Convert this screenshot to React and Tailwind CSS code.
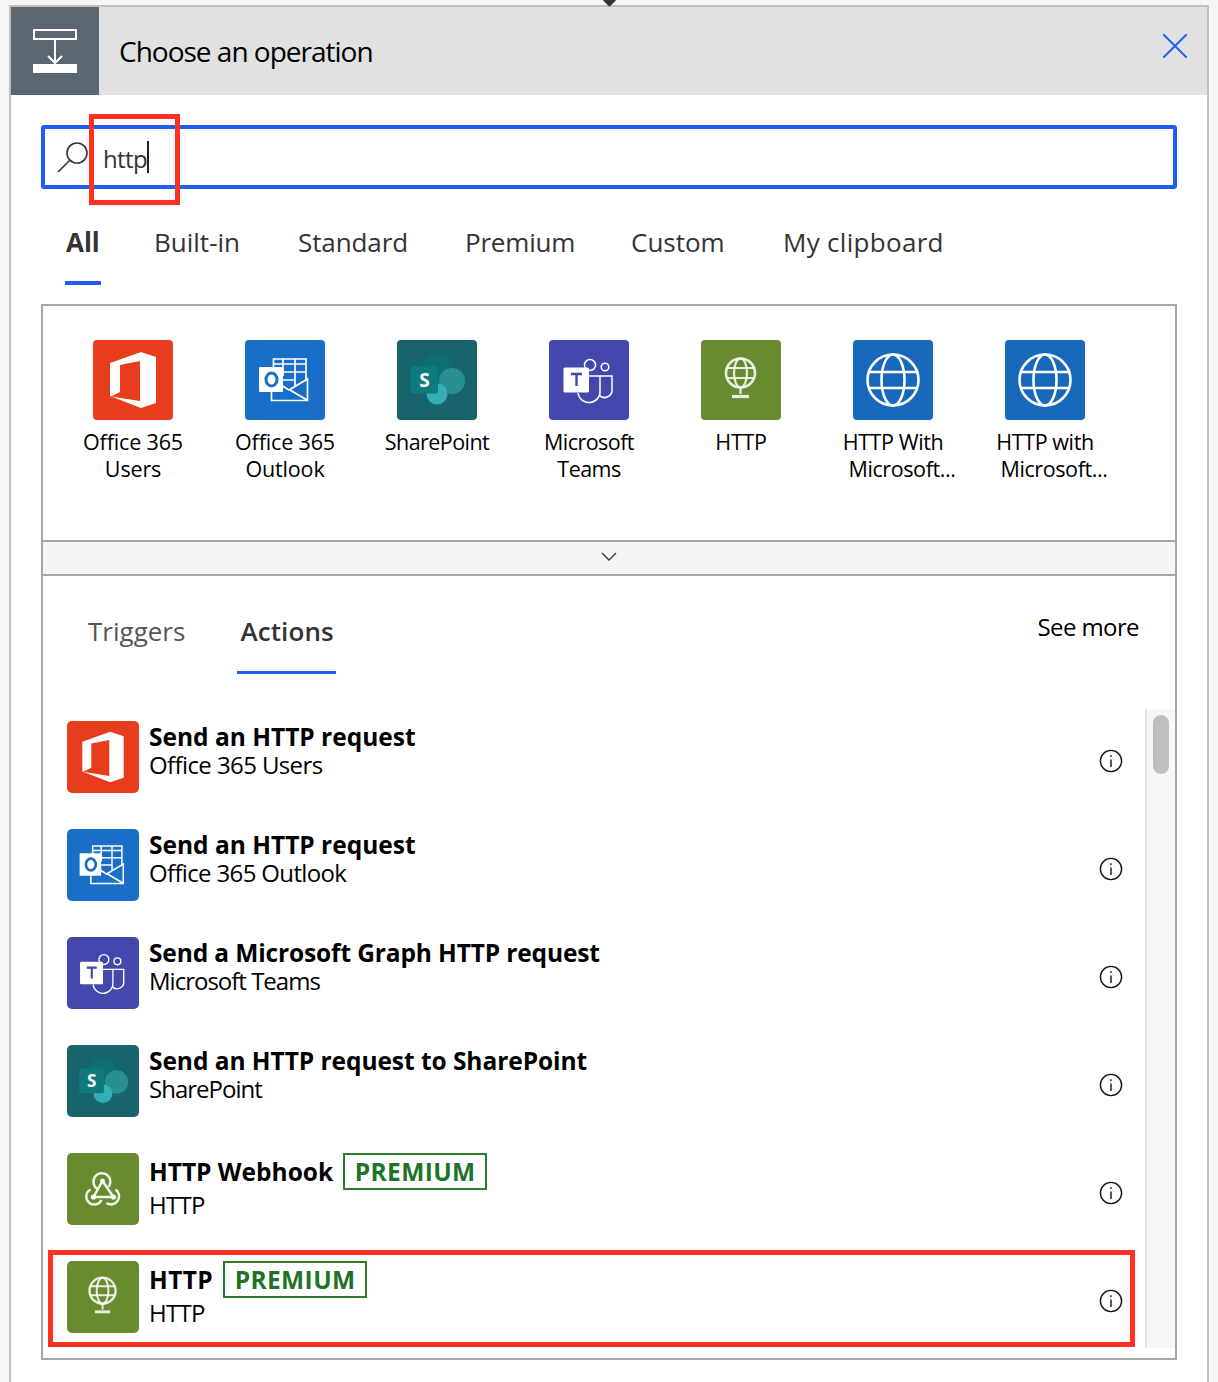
import React from 'react';

function Office() {
  return <svg viewBox="0 0 80 80" className="w-full h-full"><path fillRule="evenodd" fill="#fff" d="M17 23 48 12 63 17V63L48 68 17 56ZM27 25V52L18 56.5 47 61V21Z" /></svg>;
}
function Outlook() {
  return <svg viewBox="0 0 80 80" className="w-full h-full" fill="none" stroke="#fff" strokeWidth="1.7">
    <path d="M28.5 28V19H61V40M38 19V36M50 19V46M28 24H61M38 32H61M38 40H50" />
    <path d="M26.5 47V60.5H62.5V39L44 50 36 45" /><path d="M45 50 62 60" />
    <rect x="14" y="27" width="24" height="25" rx="1" fill="#fff" stroke="none" />
    <ellipse cx="26.5" cy="39.5" rx="5.5" ry="6.5" stroke="#196ec8" strokeWidth="3" />
  </svg>;
}
function SharePoint() {
  return <svg viewBox="0 0 80 80" className="w-full h-full">
    <circle cx="40" cy="28" r="15" fill="#0f6e70" />
    <circle cx="55" cy="41" r="13" fill="#2a8f90" />
    <circle cx="40" cy="54" r="10.5" fill="#36aeb8" />
    <rect x="13.5" y="26" width="27.5" height="27.5" rx="2" fill="#0d7a7c" />
    <text x="27.5" y="46.5" textAnchor="middle" fill="#fff" fontSize="19" fontWeight="700" fontFamily="'Open Sans',sans-serif">S</text>
  </svg>;
}
function Teams() {
  return <svg viewBox="0 0 80 80" className="w-full h-full" fill="none" stroke="#fff" strokeWidth="1.5">
    <circle cx="41" cy="25" r="5.5" /><circle cx="56" cy="27" r="3.8" />
    <path d="M40 36H51V50A11 11 0 0 1 29 53" />
    <path d="M51 36H63V49A7.5 7.5 0 0 1 50 55" />
    <rect x="14.5" y="27.5" width="25.5" height="25" rx="1.5" fill="#fff" stroke="none" />
    <path d="M22 34H33M27.5 34V46" stroke="#4448ac" strokeWidth="2.4" />
  </svg>;
}
function GreenGlobe() {
  return <svg viewBox="0 0 80 80" className="w-full h-full blur-[0.6px]" fill="none" stroke="#fff" strokeOpacity=".85" strokeWidth="2.2">
    <circle cx="39.5" cy="33" r="14.5" strokeWidth="2.6" />
    <ellipse cx="39.5" cy="33" rx="6.5" ry="14.5" />
    <path d="M26 28H53M26 38H53" />
    <path d="M39.5 48V54" strokeWidth="2.2" />
    <path d="M31 56.5H48" strokeWidth="3.2" />
  </svg>;
}
function BlueGlobe() {
  return <svg viewBox="0 0 80 80" className="w-full h-full" fill="none" stroke="#fff" strokeWidth="2.6">
    <circle cx="40" cy="40" r="25.5" />
    <ellipse cx="40" cy="40" rx="11.5" ry="25.5" />
    <path d="M16 32H64M16 48H64" />
  </svg>;
}
function Hook() {
  return <svg viewBox="0 0 72 72" className="w-full h-full blur-[0.4px]" fill="none" stroke="#fff" strokeOpacity=".9" strokeWidth="2.5">
    <path d="M35.5 28 46.5 44H26.5ZM30.5 36A8.5 8.5 0 1 1 41.5 34" />
    <path d="M23.5 36.5A8 8 0 1 0 34.5 47" />
    <path d="M39.5 50A8 8 0 1 0 48.5 36.5" />
    <circle cx="35.5" cy="28" r="2.4" fill="#fff" stroke="none" />
    <circle cx="26.5" cy="44" r="2.6" fill="#fff" stroke="none" />
    <circle cx="46.5" cy="44" r="2.6" fill="#fff" stroke="none" />
  </svg>;
}

const connectors = [
  { bg: 'bg-[#e73d1c]', Icon: Office, l: ['Office 365', 'Users'], tr: 'tracking-[-0.15px]' },
  { bg: 'bg-[#196ec8]', Icon: Outlook, l: ['Office 365', 'Outlook'], tr: 'tracking-[-0.15px]' },
  { bg: 'bg-[#17646a]', Icon: SharePoint, l: ['SharePoint'], tr: 'tracking-[-0.55px]' },
  { bg: 'bg-[#4448ac]', Icon: Teams, l: ['Microsoft', 'Teams'], tr: 'tracking-[-0.55px]' },
  { bg: 'bg-[#688b30]', Icon: GreenGlobe, l: ['HTTP'], tr: 'tracking-[-0.3px]' },
  { bg: 'bg-[#1868bb]', Icon: BlueGlobe, l: ['HTTP With', 'Microsoft...'], tr: 'tracking-[-0.4px]', shift: true },
  { bg: 'bg-[#1868bb]', Icon: BlueGlobe, l: ['HTTP with', 'Microsoft...'], tr: 'tracking-[-0.4px]', shift: true },
];

const rows = [
  { bg: 'bg-[#e73d1c]', Icon: Office, t: 'Send an HTTP request', s: 'Office 365 Users', tr: 'tracking-[-0.6px]', ttr: 'tracking-[0px]' },
  { bg: 'bg-[#196ec8]', Icon: Outlook, t: 'Send an HTTP request', s: 'Office 365 Outlook', tr: 'tracking-[-0.65px]', ttr: 'tracking-[0px]' },
  { bg: 'bg-[#4448ac]', Icon: Teams, t: 'Send a Microsoft Graph HTTP request', s: 'Microsoft Teams', tr: 'tracking-[-1px]', ttr: 'tracking-[-0.13px]' },
  { bg: 'bg-[#17646a]', Icon: SharePoint, t: 'Send an HTTP request to SharePoint', s: 'SharePoint', tr: 'tracking-[-1px]', ttr: 'tracking-[-0.05px]' },
  { bg: 'bg-[#688b30]', Icon: Hook, t: 'HTTP Webhook', s: 'HTTP', premium: true, tr: 'tracking-[-0.7px]', ttr: 'tracking-[0px]' },
  { bg: 'bg-[#688b30]', Icon: GreenGlobe, t: 'HTTP', s: 'HTTP', premium: true, tr: 'tracking-[-0.7px]', ttr: 'tracking-[0.4px]' },
];

const tabs = [
  { t: 'All', w: 'w-[88px]', c: 'font-bold tracking-[0px]' },
  { t: 'Built-in', w: 'w-[144px]', c: 'font-normal tracking-[0px]' },
  { t: 'Standard', w: 'w-[167px]', c: 'font-normal tracking-[-0.1px]' },
  { t: 'Premium', w: 'w-[166px]', c: 'font-normal tracking-[-0.2px]' },
  { t: 'Custom', w: 'w-[152px]', c: 'font-normal tracking-[0px]' },
  { t: 'My clipboard', w: 'w-[170px]', c: 'font-normal tracking-[0.3px]' },
];

function Info() {
  return <svg width="24" height="24" viewBox="0 0 24 24" fill="none" stroke="#111" strokeWidth="1.4">
    <circle cx="12" cy="12" r="10.6" /><path d="M12 10.5V18" /><path d="M12 6.2V8" />
  </svg>;
}

export default function App() {
  return (
    <div className="bg-[#f6f6f6] h-[1382px] overflow-hidden pt-[5px] pl-[9px] font-['Open_Sans',sans-serif]">
      <div className="relative w-[1200px] h-[1377px] bg-white border-2 border-b-0 border-[#bfbfbf]">
        <div className="absolute left-[594px] -top-[11px] w-[9px] h-[9px] rotate-45 bg-[#333]" />
        <header className="flex items-center h-[88px] bg-[#e1e1e1]">
          <div className="w-[88px] h-[88px] bg-[#5a6672] shrink-0">
            <svg width="88" height="88" viewBox="0 0 88 88" fill="none" stroke="#fff" strokeWidth="2">
              <rect x="23" y="23" width="42" height="9" />
              <path d="M44 32V56M37 49 44 56 51 49" />
              <rect x="22" y="57" width="44" height="9" fill="#fff" stroke="none" />
            </svg>
          </div>
          <h1 className="ml-5 text-[28px] leading-[36px] text-black tracking-[-1px] font-normal">Choose an operation</h1>
          <svg className="ml-auto mr-[20px] mb-[10px]" width="24" height="24" viewBox="0 0 24 24" stroke="#1f62f5" strokeWidth="2"><path d="M0 0 24 24M24 0 0 24" /></svg>
        </header>

        <div className="mx-[30px] mt-[30px]">
          <div className="flex items-center h-[64px] border-4 border-[#1f5fef] rounded-[3px] pl-[12px]">
            <svg width="32" height="32" viewBox="0 0 32 32" fill="none" stroke="#333" strokeWidth="1.6">
              <circle cx="20" cy="12" r="10" /><path d="M13 19 1 31" />
            </svg>
            <span className="ml-[14px] pt-[3px] text-[24px] leading-[32px] text-[#333] tracking-[-0.6px]">http</span>
            <span className="w-[2px] h-[32px] bg-[#222]" />
          </div>

          <nav className="flex h-[96px] pl-[25px]">
            {tabs.map((t, i) => (
              <div key={t.t} className={`relative pt-[35px] shrink-0 ${t.w}`}>
                <span className={`text-[26px] leading-[36px] text-[#333] ${t.c}`}>{t.t}</span>
                {i === 0 && <div className="absolute left-[-1px] w-[36px] top-[92px] h-[4px] bg-[#1f5fef]" />}
              </div>
            ))}
          </nav>

          <section className="mt-[19px] w-[1136px] h-[1056px] border-2 border-[#a6a6a6]">
            <div className="flex h-[234px] pl-[14px] pt-[34px]">
              {connectors.map((c, i) => (
                <div key={i} className="w-[152px] flex flex-col items-center">
                  <div className={`w-[80px] h-[80px] rounded-[4px] ${c.bg}`}><c.Icon /></div>
                  <div className={`mt-2 w-[152px] text-center text-[21.5px] leading-[27px] text-black ${c.tr}`}>
                    {c.l.map((x, j) => <div key={x} className={j === 1 && c.shift ? 'pl-[18px]' : ''}>{x}</div>)}
                  </div>
                </div>
              ))}
            </div>
            <div className="flex items-center justify-center h-[36px] pb-[2px] bg-[#f5f5f5] border-y-2 border-[#a6a6a6]">
              <svg width="16" height="10" viewBox="0 0 16 10" fill="none" stroke="#333" strokeWidth="1.3"><path d="M1 1 8 8 15 1" /></svg>
            </div>
            <div className="flex h-[133px] pl-[45px] pr-[36px]">
              <div className="pt-[37px]">
                <span className="text-[26px] leading-[36px] text-[#555] tracking-[0px]">Triggers</span>
              </div>
              <div className="relative ml-[55px] pt-[37px]">
                <span className="text-[26px] leading-[36px] text-[#333] tracking-[0.1px] font-semibold">Actions</span>
                <div className="absolute left-[-3px] right-[-2px] top-[95px] h-[3px] bg-[#1f5fef]" />
              </div>
              <div className="ml-auto pt-[35px] text-[24px] leading-[32px] text-black tracking-[-0.6px]">See more</div>
            </div>
            <div className="flex h-[639px] overflow-hidden">
              <ul className="flex-1 min-w-0">
                {rows.map((r, i) => (
                  <li key={i} className="flex h-[108px] pt-[12px] pl-[24px] pr-[22px]">
                    <div className={`w-[72px] h-[72px] rounded-[5px] shrink-0 ${r.bg}`}><r.Icon /></div>
                    <div className="ml-[10px]">
                      <div className={`flex items-center gap-[10px] ${r.premium ? 'h-[37px]' : 'h-[30px] pt-[2px]'}`}>
                        <span className={`text-[24.5px] leading-[28px] text-black font-bold ${r.ttr}`}>{r.t}</span>
                        {r.premium && <span className="flex items-center justify-center w-[144px] h-[37px] pt-px border-2 border-[#2d7d2f] text-[24.5px] leading-[30px] font-bold text-[#1e7327] tracking-[0.4px]">PREMIUM</span>}
                      </div>
                      <div className={`text-[24px] leading-[28px] text-black ${r.premium ? 'mt-px' : ''} ${r.tr}`}>{r.s}</div>
                    </div>
                    <div className="ml-auto mt-[28px]"><Info /></div>
                  </li>
                ))}
              </ul>
              <div className="w-[30px] shrink-0 bg-[#f7f7f7] border-l-2 border-[#e3e3e3] pl-[6px] pt-[6px]">
                <div className="w-[16px] h-[59px] rounded-full bg-[#bfbfbf]" />
              </div>
            </div>
          </section>
        </div>

        <div className="absolute left-[78px] top-[107px] w-[91px] h-[91px] border-[5px] border-[#ff3020]" />
        <div className="absolute left-[37px] top-[1243px] w-[1087px] h-[97px] border-[5px] border-[#ff3020]" />
      </div>
    </div>
  );
}
